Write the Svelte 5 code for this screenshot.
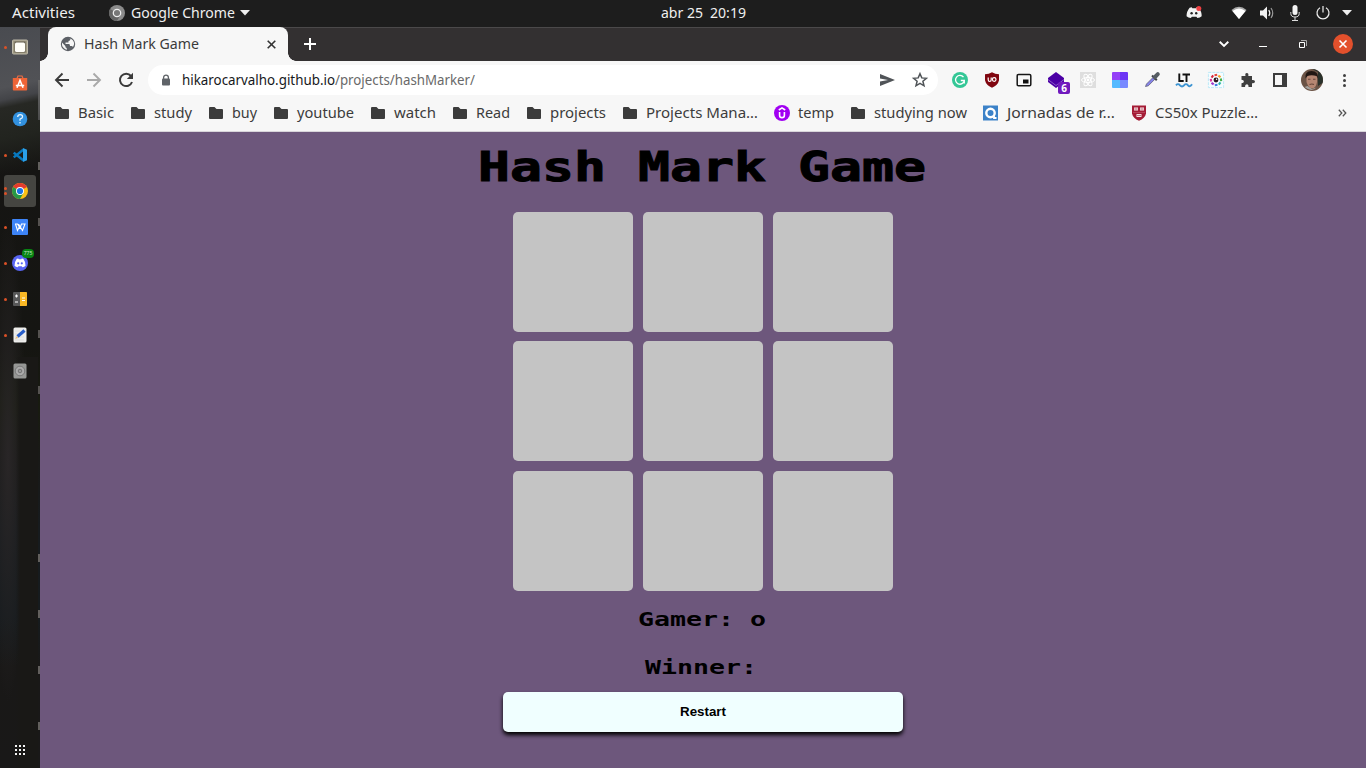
<script>
  const bookmarks = [
    ['folder', 'Basic', 36], ['folder', 'study', 38], ['folder', 'buy', 25], ['folder', 'youtube', 57],
    ['folder', 'watch', 42], ['folder', 'Read', 34], ['folder', 'projects', 56], ['folder', 'Projects Mana…', 112],
    ['temp', 'temp', 36], ['folder', 'studying now', 93], ['quest', 'Jornadas de r…', 108], ['shield', 'CS50x Puzzle…', 103]
  ];
  const extensions = ['grammarly', 'ublock', 'pip', 'layers', 'react', 'squares', 'picker', 'lt', 'lens', 'puzzle', 'panel', 'avatar', 'dots'];
  const dock = [['files', 1], ['store', 0], ['help', 0], ['code', 1], ['chrome', 2], ['wps', 1], ['discord', 1], ['calc', 1], ['edit', 1], ['disk', 0]];
  const hues = ['#e8453c', '#f3a32b', '#46b04a', '#2bb7a3', '#3a7be0', '#a136c7', '#e23b9b', '#d7263d'];
  let cells = $state(Array(9).fill(''));
  let gamer = $state('o');
  const lines = [[0,1,2],[3,4,5],[6,7,8],[0,3,6],[1,4,7],[2,5,8],[0,4,8],[2,4,6]];
  let winner = $derived.by(() => {
    for (const [a, b, c] of lines) if (cells[a] && cells[a] === cells[b] && cells[a] === cells[c]) return cells[a];
    return '';
  });
  function play(i) {
    if (cells[i] || winner) return;
    cells[i] = gamer;
    gamer = gamer === 'o' ? 'x' : 'o';
  }
  function restart() {
    cells = Array(9).fill('');
    gamer = 'o';
  }
</script>

{#snippet fit(t, w, fill)}
  <svg class="fit" width={w} height="20"><text x="0" y="15" textLength={w} lengthAdjust="spacingAndGlyphs" {fill}>{t}</text></svg>
{/snippet}

{#snippet discordFace()}
  <path d="M5.2 3 7 2.5l.5.900h3l.5-.9 1.800.5q2.700 3.700 2.600 8.500-1.500 1.400-3.600 1.800l-.9-1.300H7.100l-.9 1.300q-2.100-.4-3.600-1.800Q2.500 6.700 5.200 3Z" />
{/snippet}

{#snippet icon(name)}
  <svg width="16" height="16" viewBox="0 0 16 16">
    {#if name === 'folder'}
      <path fill="#3c3c3c" d="M1 3Q1 2 2 2H6.500L8.500 4H14Q15 4 15 5V13Q15 14 14 14H2Q1 14 1 13Z" />
    {:else if name === 'temp'}
      <circle cx="8" cy="8" r="8" fill="#a100f2" />
      <path d="M5.600 7V10.200a2.400 2.400 0 0 0 4.800 0V7M4.800 5 8 2.900 11.200 5" fill="none" stroke="#fff" stroke-width="1.600" />
    {:else if name === 'quest'}
      <path fill="#3c82c8" d="M0 .5h15v15H0Z" /><circle cx="7.500" cy="8" r="4.200" fill="none" stroke="#fff" stroke-width="2.400" /><path d="M11 10.500V13h2.500" fill="none" stroke="#fff" stroke-width="1.800" />
    {:else if name === 'shield'}
      <path fill="#a51c36" d="M1 .5h14v8q-1 5-7 7.300Q2 13.500 1 8.500Z" />
      <path fill="#f2dfe2" d="M3 2.500h4v3H3Zm6 0h4v3H9ZM5.500 9h5v3h-5Z" /><path d="M3.500 4h3M9.500 4h3M6 10.500h4M2 7.500h12" stroke="#b84d60" stroke-width=".8" />
    {:else if name === 'grammarly'}
      <circle cx="8" cy="8" r="8" fill="#34c796" /><path d="M11.500 5.200A4.400 4.400 0 1 0 12.300 8.500H8.800M12.300 8.500v3" fill="none" stroke="#fff" stroke-width="1.300" />
    {:else if name === 'ublock'}
      <path fill="#800610" d="M8 .2Q11 2 15 2.200v6Q14 13 8 15.800 2 13 1 8.200v-6Q5 2 8 .2Z" /><path d="M4.200 5.500v2.300q0 1.700 1.500 1.700t1.500-1.700V5.500" fill="none" stroke="#fff" stroke-width="1.200" /><circle cx="10.200" cy="7.500" r="1.800" fill="none" stroke="#fff" stroke-width="1.200" />
    {:else if name === 'pip'}
      <rect x="1.200" y="2.500" width="13.600" height="11.200" rx="1.300" fill="none" stroke="#161616" stroke-width="1.500" /><path fill="#111" d="M7 7.500h5.500v4H7Z" />
    {:else if name === 'layers'}
      <path fill="#4b00a5" d="m0 6 8-6 8 6v4l-8 6-8-6Z" /><path d="m0 7.500 8 6 8-6" fill="none" stroke="#c9b3e4" stroke-width=".5" />
    {:else if name === 'react'}
      <path fill="#dedede" d="M0 0h16v16H0Z" /><g fill="none" stroke="#fff"><ellipse cx="8" cy="8" rx="6.500" ry="2.500" /><ellipse cx="8" cy="8" rx="6.500" ry="2.500" transform="rotate(60 8 8)" /><ellipse cx="8" cy="8" rx="6.500" ry="2.500" transform="rotate(120 8 8)" /></g><circle cx="8" cy="8" r="1.400" fill="#fff" />
    {:else if name === 'squares'}
      <path fill="#9440f7" d="M0 1q0-1 1-1h7v8H0Z" /><path fill="#6d35f5" d="M8 0h7q1 0 1 1v7H8Z" /><path fill="#55baff" d="M0 8h8v8H1q-1 0-1-1Z" /><path fill="#7889ff" d="M8 8h8v7q0 1-1 1H8Z" />
    {:else if name === 'picker'}
      <path d="m1.500 14.500 1-2.500 7-7 1.800 1.800-7 7Z" fill="#8583ea" stroke="#606078" stroke-width=".8" /><path d="m8 3.500 4.800 4.800" stroke="#404449" stroke-width="2" /><path d="m11 5 2.800-2.800" stroke="#555c62" stroke-width="4" stroke-linecap="round" />
    {:else if name === 'lt'}
      <path d="M3.300 1.500V9h4.400M6.500 2.500h7.500M10.500 3v7" stroke="#111" stroke-width="1.900" fill="none" /><path d="M0 13.300q2-2.300 4 0t4 0 4 0 4-1" stroke="#3d94d2" stroke-width="1.900" fill="none" />
    {:else if name === 'lens'}
      <rect x=".4" y=".4" width="15.200" height="15.200" fill="#f5fcff" stroke="#bde9f7" stroke-dasharray="3 1" />
      {#each hues as c, i}<path d="M6.500 3.200 9.200 2.800" stroke={c} stroke-width="2.100" transform="rotate({i * 45} 8 8)" />{/each}
      <circle cx="8" cy="8" r="2.400" fill="#2b1720" /><circle cx="8.600" cy="7.300" r=".8" fill="#fff" />
    {:else if name === 'puzzle'}
      <path fill="#3f3f3f" d="M1.500 4h4q-.8-3 1.300-3t1.500 3H12v4q3-.5 3 1.600t-3 1.600V15H8.500q.2-2.700-1.700-2.700T5 15H1.500v-3.800q2.400 0 2.400-1.700T1.500 7.700Z" />
    {:else if name === 'panel'}
      <path fill="#3d3d3d" d="M1 1h14v14H1Zm2 2v10h7V3Z" fill-rule="evenodd" />
    {:else if name === 'dots'}
      <g fill="#3f3f3f"><circle cx="8.500" cy="3.500" r="1.500" /><circle cx="8.500" cy="8.500" r="1.500" /><circle cx="8.500" cy="13.500" r="1.500" /></g>
    {:else if name === 'files'}
      <rect x=".5" y="1" width="15" height="14" rx="1" fill="#9f9982" stroke="#bdb8a8" /><path fill="#655f50" d="M2.500 2.500h11v11h-11Z" /><rect x="3" y="3.500" width="10" height="9.500" rx="1.500" fill="#fffef8" />
    {:else if name === 'store'}
      <path d="M5 3.500 6 1h4l1 2.500" fill="none" stroke="#ef6d44" stroke-width="1.200" /><path fill="#ee6437" d="M.8 3h14.400v11.500q0 1-1 1H1.800q-1 0-1-1Z" /><path d="m5 12.800 3-7.500 3 7.500M3.800 10.500h8.400" stroke="#fff" stroke-width="1.600" fill="none" />
    {:else if name === 'help'}
      <circle cx="8" cy="8" r="7.300" fill="#3291df" /><path d="M5.700 6q0-2.300 2.500-2.300T10.500 6Q10.500 7.300 8 8.200v1.500M8 11v1.500" fill="none" stroke="#e7f5ff" stroke-width="1.300" />
    {:else if name === 'code'}
      <path d="M11.500 2.500 1.700 10.400M1.700 5.600l9.800 7.900" stroke="#0879bf" stroke-width="2.500" /><path fill="#2a9fe8" d="m11 1 4 1.700v10.600L11 15Z" />
    {:else if name === 'chrome'}
      <circle cx="8" cy="8" r="8" fill="#fbc116" /><path fill="#e33b2e" d="M8 8 1.100 4A8 8 0 0 1 14.900 4Z" /><path fill="#279847" d="M8 8 1.100 4A8 8 0 0 0 8 16l3.500-6Z" /><circle cx="8" cy="8" r="4" fill="#fff" /><circle cx="8" cy="8" r="3.100" fill="#1a73e8" />
    {:else if name === 'wps'}
      <rect width="16" height="16" rx="1" fill="#3d84f7" /><path d="M3 5h2.500L8 9l1.500-4H13l-2.500 6.500L6.500 5M3.500 5l2 6.500L8 6.500" fill="none" stroke="#fff" stroke-width="1.100" />
    {:else if name === 'discord'}
      <circle cx="8" cy="8" r="8" fill="#5865f2" /><g fill="#fff" transform="translate(.3 1.400) scale(.86 .82)">{@render discordFace()}</g><circle cx="6.200" cy="8.300" r="1.100" fill="#5865f2" /><circle cx="9.800" cy="8.300" r="1.100" fill="#5865f2" />
    {:else if name === 'calc'}
      <rect x="1" y="1" width="14" height="14" rx="1" fill="#585858" /><path fill="#f9b825" d="M8 1h6q1 0 1 1v12q0 1-1 1H8Z" /><path d="M3 5h3M4.500 3.500v3M3 11h3M10 7h3M10 9.500h3" stroke="#fff" stroke-width="1.200" />
    {:else if name === 'edit'}
      <rect x="1.500" y=".5" width="13" height="15" rx="1.500" fill="#eeeeec" /><path d="M3 4h5M3 7h4M3 10h9M3 13h9" stroke="#ccc" stroke-width=".5" /><path d="m5.500 9.500 7-6" stroke="#285ec9" stroke-width="3.200" /><path d="m3 12 2-3 1 2Z" fill="#e8bc7b" />
    {:else if name === 'disk'}
      <rect x="1.500" y=".5" width="13" height="15" rx="1.500" fill="#969795" /><circle cx="8" cy="8" r="4.800" fill="#aaa" stroke="#777" /><circle cx="8" cy="8" r="1.800" fill="#999" stroke="#666" stroke-width=".8" />
    {:else if name === 'globe'}
      <circle cx="8" cy="8" r="7.200" fill="#5c6066" /><path fill="#f7f7f7" d="M9 2.200 10.500 3q-.2 1.800-2 2v1.500H5.500V8H9q1 0 1 2h1.500q1 .2 1.500 1l1.200-3q-.2-4.500-5.200-5.800ZM2 6.500q-.5 4.500 3 6.500l1.700 1V12q-1.400-.2-1.400-2Z" />
    {:else if name === 'chromeGray'}
      <circle cx="8" cy="8" r="8" fill="#8b8b8b" /><path fill="#656565" d="M8 8 1.100 4A8 8 0 0 0 8 16l3.500-6Z" /><circle cx="8" cy="8" r="3.700" fill="#777" stroke="#eee" stroke-width="1.300" />
    {/if}
  </svg>
{/snippet}

<div class="desktop">
  <header class="topbar">
    <div class="activities">{@render fit('Activities', 63, '#efefef')}</div>
    <div class="app">{@render icon('chromeGray')}{@render fit('Google Chrome', 104, '#efefef')}
      <svg width="10" height="6"><path d="M0 0h10L5 5.500Z" fill="#efefef" /></svg>
    </div>
    <div class="clock">{@render fit('abr 25', 42, '#efefef')}{@render fit('20:19', 36, '#efefef')}</div>
    <div class="status">
      <svg width="16" height="16" viewBox="0 0 16 16"><g fill="#f2f2f2" transform="translate(-2.500 -.2) scale(1.180 1)">{@render discordFace()}</g><circle cx="5.600" cy="8.300" r="1.200" fill="#222" /><circle cx="10.200" cy="8.300" r="1.200" fill="#222" /><circle cx="12.800" cy="3.500" r="2.500" fill="#ee4043" /></svg>
      <svg class="wifi" width="16" height="16" viewBox="0 0 16 16"><path fill="#aaa" d="M.5 5Q8-1.500 15.500 5L8 14Z" /><path fill="#fff" d="M1.500 6Q8 1 14.500 6L8 14Z" /></svg>
      <svg class="sound" width="16" height="16" viewBox="0 0 16 16"><path fill="#f2f2f2" d="M1 5.500h3l4-4v13l-4-4H1Z" /><path d="M9.800 5q2 3 0 6" fill="none" stroke="#f2f2f2" stroke-width="1.200" /><path d="M12 3q3.500 5 0 10" fill="none" stroke="#999" stroke-width="1.200" /></svg>
      <svg class="mic" width="14" height="16" viewBox="0 0 14 16"><rect x="4.500" y="0" width="5" height="10" rx="2.500" fill="#f2f2f2" /><path d="M2.800 7v1.500q0 3.500 4.200 3.500t4.200-3.500V7M7 12v3.500M4 15.500h6" fill="none" stroke="#ddd" /></svg>
      <svg class="power" width="14" height="16" viewBox="0 0 14 16"><path d="M4 2.700a6 6 0 1 0 6 0M7 1v6.500" fill="none" stroke="#eee" stroke-width="1.200" /></svg>
      <svg class="menu" width="10" height="6"><path d="M0 0h10L5 5.500Z" fill="#efefef" /></svg>
    </div>
  </header>
  <div class="workspace">
    <aside class="dock">
      {#each dock as [name, running]}
        <div class="launcher" class:active={name === 'chrome'}>
          {#if running}<span class="pips">{#each Array(running) as _}<i></i>{/each}</span>{/if}
          {@render icon(name)}
          {#if name === 'discord'}<span class="unread">775</span>{/if}
        </div>
      {/each}
      <svg class="grid-icon" width="10" height="10">{#each [0, 1, 2] as r}{#each [0, 1, 2] as c}<rect x={c * 4} y={r * 4} width="2" height="2" fill="#f4f4f4" />{/each}{/each}</svg>
    </aside>
    <main class="browser">
      <div class="tabs">
        <div class="tab">
          {@render icon('globe')}{@render fit('Hash Mark Game', 115, '#3b3b3b')}
          <svg class="close-tab" width="9" height="9"><path d="m.7.700 7.600 7.600m0-7.600L.7 8.300" stroke="#333" stroke-width="1.600" /></svg>
        </div>
        <svg class="plus" width="12" height="12"><path d="M6 0v12M0 6h12" stroke="#fff" stroke-width="2" /></svg>
        <div class="window-controls">
          <svg width="10" height="6"><path d="m.7.700 4.300 4.200L9.300.7" stroke="#fff" stroke-width="1.900" fill="none" /></svg>
          <svg class="min" width="8" height="6"><path d="M0 5.500h8" stroke="#fff" /></svg>
          <svg class="restore" width="8" height="8"><path d="M.5 2.500h5v5h-5Z" fill="none" stroke="#fff" /><path d="M2 .5h5.500V6" fill="none" stroke="#aaa" /></svg>
          <div class="shut"><svg width="8" height="8"><path d="m.5.500 7 7m0-7-7 7" stroke="#fff" stroke-width="1.600" /></svg></div>
        </div>
      </div>
      <div class="toolbar">
        <div class="nav">
          <svg width="16" height="16" viewBox="0 0 16 16"><path d="M15 8H2M8.500 1.500 2 8l6.500 6.500" stroke="#3b3b3b" stroke-width="1.900" fill="none" /></svg>
          <svg width="16" height="16" viewBox="0 0 16 16"><path d="M1 8h13M7.500 1.500 14 8l-6.500 6.500" stroke="#a9a9a9" stroke-width="1.900" fill="none" /></svg>
          <svg width="16" height="16" viewBox="0 0 16 16"><path d="M13 4A6.200 6.200 0 1 0 14 10" stroke="#3b3b3b" stroke-width="2" fill="none" /><path fill="#3b3b3b" d="M15 .8V7H8.800Z" /></svg>
        </div>
        <div class="address">
          <svg class="lock" width="10" height="13"><rect x="1" y="4.500" width="8" height="7" rx="1" fill="#5f6368" /><path d="M2.600 5V3.500a2.400 2.400 0 0 1 4.800 0V5" fill="none" stroke="#5f6368" stroke-width="1.300" /></svg>
          {@render fit('hikarocarvalho.github.io', 153, '#17191c')}{@render fit('/projects/hashMarker/', 140, '#696969')}
          <svg class="send" width="15" height="14"><path fill="#505458" d="M0 1 15 7 0 13V8.500L8 7 0 5.500Z" /></svg>
          <svg class="star" width="16" height="16" viewBox="0 0 16 16"><path d="m8 1.700 1.800 4.200 4.600.4-3.500 3 1.100 4.500L8 11.400l-4 2.400 1.100-4.500-3.500-3 4.600-.4Z" fill="none" stroke="#505458" stroke-width="1.500" /></svg>
        </div>
        <div class="extensions">
          {#each extensions as name}
            <div class="extension">
              {#if name === 'avatar'}
                <svg width="22" height="22" viewBox="0 0 22 22"><circle cx="11" cy="11" r="11" fill="#6b5345" /><path fill="#29312b" d="M11 0a11 11 0 0 1 10.500 14L17 17V3Z" /><path fill="#b58672" d="M5.500 7q5-4 10.500 0v6q-1 6-5 6.500-4-1-5.500-6.500Z" /><path fill="#211713" d="M4.500 9.500Q3.500 2 10.500 2t6.500 7.500L15.500 7q-5-1.500-9 0Z" /><path d="M7 10.300h2.500m2.500 0h2.500M8.500 15.500q2.500-1 4.500 0" stroke="#65463a" stroke-width="1.100" fill="none" /><path fill="#a5a29e" d="m3.500 18 3-1 4.500 3 4.500-1.500q-5 5-12-.5Z" /></svg>
              {:else}{@render icon(name)}{/if}
              {#if name === 'layers'}<span class="count">6</span>{/if}
            </div>
          {/each}
        </div>
      </div>
      <div class="bookmarks">
        {#each bookmarks as [kind, title, width]}
          <div class="bookmark">{@render icon(kind)}{@render fit(title, width, '#3c3c3c')}</div>
        {/each}
        <svg class="more" width="9" height="8"><path d="m.8.800 3 3.200-3 3.200m4-6.400 3 3.200-3 3.200" fill="none" stroke="#555" stroke-width="1.300" /></svg>
      </div>
      <section class="page">
        <h1><svg width="448" height="44"><text x="0" y="36" textLength="448" lengthAdjust="spacingAndGlyphs">Hash Mark Game</text></svg></h1>
        <div class="board">
          {#each cells as cell, i}<button class="cell" aria-label="Cell {i + 1}" onclick={() => play(i)}>{cell}</button>{/each}
        </div>
        <p class="gamer"><svg width="128" height="22"><text x="0" y="17" textLength="128" lengthAdjust="spacingAndGlyphs">Gamer: {gamer}</text></svg></p>
        <p class="winner"><svg width="112" height="22"><text x="0" y="17" textLength={winner ? 144 : 112} lengthAdjust="spacingAndGlyphs">Winner:{winner ? ' ' + winner : ''}</text></svg></p>
        <button class="restart" onclick={restart}>Restart</button>
      </section>
    </main>
  </div>
</div>

<style>
  :global(body) { margin: 0; overflow: hidden; }
  .desktop { width: 1366px; height: 768px; display: flex; flex-direction: column; overflow: hidden; background: #1e1e1e; font-family: "Noto Sans", sans-serif; }
  svg { display: block; flex: none; overflow: visible; }
  .fit text { font: 14px "Noto Sans", sans-serif; }
  .topbar { height: 27px; flex: none; box-sizing: border-box; padding-bottom: 1px; display: flex; align-items: center; background: #1d1d1d; }
  .activities { width: 97px; padding-left: 12px; }
  .app { width: 552px; display: flex; align-items: center; }
  .app svg:nth-child(2) { margin: 0 5px 0 6px; }
  .clock { display: flex; gap: 7px; width: 525px; }
  .status { display: flex; align-items: center; }
  .wifi { margin-left: 29px; } .sound { margin-left: 12px; } .mic { margin-left: 13px; } .power { margin-left: 14px; } .menu { margin-left: 12px; }
  .workspace { flex: 1; min-height: 0; display: flex; }
  .dock {
    width: 40px; flex: none; display: flex; flex-direction: column; align-items: center; padding-top: 2px; box-sizing: border-box;
    background:
      linear-gradient(#625f5d, #625f5d) 38px 135px / 2px 8px no-repeat,
      linear-gradient(#555250, #555250) 38px 191px / 2px 8px no-repeat,
      linear-gradient(#555250, #555250) 38px 303px / 2px 8px no-repeat,
      linear-gradient(#555250, #555250) 38px 359px / 2px 8px no-repeat,
      linear-gradient(#625f5d, #625f5d) 38px 527px / 2px 8px no-repeat,
      linear-gradient(#625f5d, #625f5d) 38px 583px / 2px 8px no-repeat,
      linear-gradient(#625f5d, #625f5d) 38px 639px / 2px 8px no-repeat,
      linear-gradient(#625f5d, #625f5d) 38px 695px / 2px 8px no-repeat,
      linear-gradient(#686868, #4c4c4c) 38px 53px / 2px 40px no-repeat,
      linear-gradient(90deg, transparent 16px, #191816 20px) 0 330px / 38px 411px no-repeat,
      radial-gradient(ellipse at 8px 432px, #292627, transparent 18px),
      linear-gradient(168deg, #494b50 0, #515256 60px, #434448 72px, #272824 80px, #22241f 110px, transparent 145px),
      linear-gradient(#161514 0, #151512 320px, #181b10 380px, #191917 430px, #171b1e 500px, #161b1e 590px, #191817 640px, #191818);
  }
  .launcher { position: relative; width: 32px; height: 32px; margin: 2px 0; border-radius: 3px; display: flex; align-items: center; justify-content: center; }
  .active { background: #454541; }
  .pips { position: absolute; left: 0; top: 0; height: 32px; display: flex; flex-direction: column; justify-content: center; gap: 2px; }
  .pips i { width: 3px; height: 3px; border-radius: 2px; background: #dc5127; }
  .unread { position: absolute; left: 18px; top: 2px; width: 12px; height: 9px; border-radius: 4px; background: #078512; color: #c8e6c8; font: 5px/9px "Noto Sans", sans-serif; text-align: center; }
  .grid-icon { margin: auto 0 13px; }
  .browser { width: 1326px; display: flex; flex-direction: column; }
  .tabs { height: 34px; flex: none; box-sizing: border-box; display: flex; align-items: center; background: #333031; box-shadow: inset 0 1px #4b494a; padding-left: 8px; }
  .tab { position: relative; width: 240px; height: 34px; box-sizing: border-box; background: #f7f7f7; border-radius: 8px 8px 0 0; display: flex; align-items: center; padding-left: 12px; gap: 8px; }
  .tab::before, .tab::after { content: ''; position: absolute; bottom: 0; width: 8px; height: 8px; }
  .tab::before { left: -8px; background: radial-gradient(circle at 0 0, transparent 7.5px, #f7f7f7 8px); }
  .tab::after { right: -8px; background: radial-gradient(circle at 100% 0, transparent 7.5px, #f7f7f7 8px); }
  .close-tab { margin: 0 12px 0 auto; }
  .plus { margin-left: 16px; }
  .window-controls { margin-left: auto; display: flex; align-items: center; padding-right: 13px; }
  .min { margin-left: 30px; } .restore { margin-left: 32px; }
  .shut { width: 20px; height: 20px; margin-left: 26px; border-radius: 50%; background: #e3502c; display: flex; align-items: center; justify-content: center; }
  .toolbar { height: 38px; flex: none; background: #f7f7f7; display: flex; align-items: center; padding-left: 14px; }
  .nav { display: flex; gap: 16px; width: 94px; }
  .address { width: 790px; height: 30px; box-sizing: border-box; background: #fff; border-radius: 15px; display: flex; align-items: center; padding: 0 10px 0 13px; }
  .lock { margin-right: 11px; } .send { margin-left: auto; margin-right: 17px; }
  .extensions { display: flex; margin-left: 6px; }
  .extension { position: relative; width: 32px; display: flex; align-items: center; justify-content: center; }
  .count { position: absolute; left: 18px; top: 13px; width: 12px; height: 12px; border-radius: 2px; background: #7019bd; color: #fff; font: bold 10px/12px "Noto Sans", sans-serif; text-align: center; }
  .bookmarks { height: 28px; flex: none; padding: 0 19px 4px 14px; background: #f7f7f7; display: flex; align-items: center; border-bottom: 1px solid #d8d5da; }
  .bookmark { display: flex; align-items: center; gap: 8px; margin-right: 16px; }
  .more { margin-left: auto; }
  .page { flex: 1; min-height: 0; background: #6d577c; display: flex; flex-direction: column; align-items: center; }
  h1 { margin: 13px 0 0 -2px; height: 67px; }
  h1 text { font: bold 41px "DejaVu Sans Mono", monospace; stroke: #000; stroke-width: 1px; }
  .board { display: grid; grid-template-columns: repeat(3, 120px); grid-template-rows: 129px 130px 120px; column-gap: 10px; }
  .cell { height: 120px; padding: 0; border: 0; border-radius: 5px; background: #c4c4c4; font: bold 60px "DejaVu Sans Mono", monospace; }
  p { margin: 0; height: 22px; }
  p text { font: bold 19px "DejaVu Sans Mono", monospace; }
  .gamer { margin-top: 18px; margin-left: -2px; }
  .winner { margin-top: 26px; margin-left: -4px; }
  .restart { width: 400px; height: 40px; flex: none; margin-top: 13px; padding: 0 0 2px; border: 0; border-radius: 5px; background: #f0ffff; color: #000; font: bold 13.333px "Liberation Sans", Arial, sans-serif; box-shadow: 0 3px 4px #000; }
</style>
